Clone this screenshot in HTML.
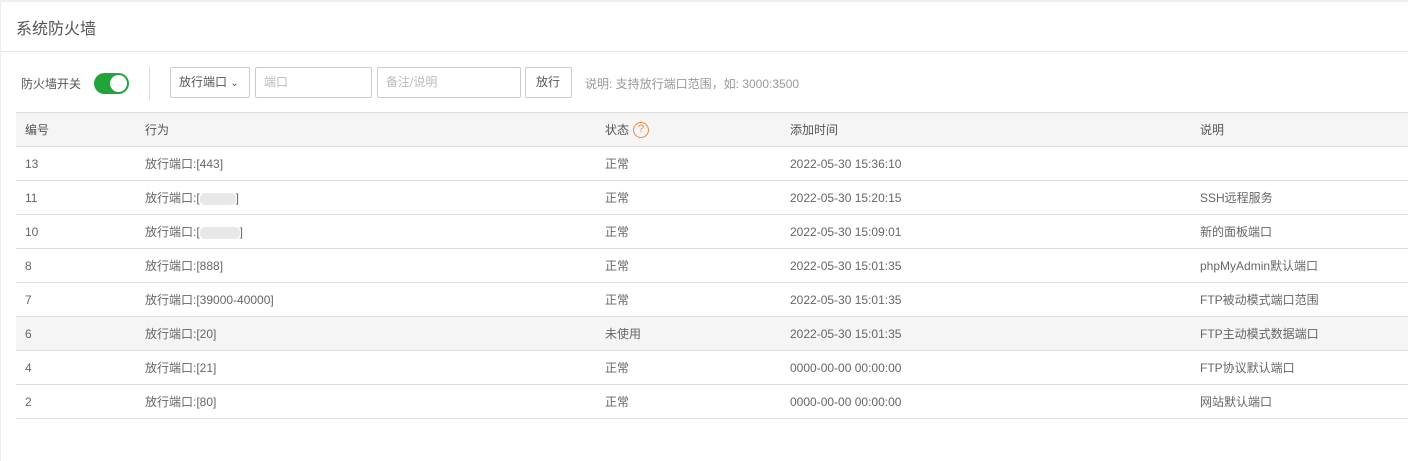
<!DOCTYPE html>
<html><head><meta charset="utf-8"><style>
*{margin:0;padding:0;box-sizing:border-box}
body{width:1408px;height:461px;background:#eee;font-family:"Liberation Sans","Noto Sans CJK SC",sans-serif;font-size:12px;color:#666;overflow:hidden;position:relative}
.panel{position:absolute;left:1px;top:2px;width:1407px;height:459px;background:#fff}
.title{height:50px;border-bottom:1px solid #e6e6e6;padding-left:15px;padding-top:3px;line-height:50px;font-size:16px;color:#555}
.bar{position:absolute;top:65px;left:0;height:32px;width:100%}
.lbl{position:absolute;left:20px;top:8px;color:#555}
.sw{position:absolute;left:93px;top:6px;width:35px;height:21px;border-radius:11px;background:#20a53a}
.sw i{position:absolute;right:2px;top:2px;width:17px;height:17px;border-radius:50%;background:#fff}
.sep{position:absolute;left:148px;top:0;width:1px;height:33px;background:#ddd}
.box{position:absolute;top:0;height:31px;border:1px solid #ccc;border-radius:2px;line-height:29px;padding-left:8px;color:#bbb}
.note{position:absolute;left:584px;top:8px;color:#999}
table{position:absolute;left:15px;top:110px;width:1392px;border-collapse:collapse}
td,th{height:34px;border-top:1px solid #ddd;border-bottom:1px solid #ddd;text-align:left;font-weight:normal;padding-left:9px;color:#666}
th{background:#f5f5f5;color:#555}
tr.h td{background:#f5f5f5}
.q{display:inline-block;width:16px;height:16px;border:1.5px solid #f0883a;border-radius:50%;color:#f0883a;text-align:center;line-height:13px;font-size:11px;vertical-align:middle;margin-left:4px}
.blur{display:inline-block;width:36px;height:12px;background:#e8e8e8;border-radius:5px;vertical-align:middle}
</style></head><body><div class="panel">
<div class="title">系统防火墙</div>
<div class="bar">
<span class="lbl">防火墙开关</span><div class="sw"><i></i></div><div class="sep"></div>
<div class="box" style="left:169px;width:80px;color:#555">放行端口 <span style="font-size:10px">&#8964;</span></div>
<div class="box" style="left:254px;width:117px">端口</div>
<div class="box" style="left:376px;width:144px">备注/说明</div>
<div class="box" style="left:524px;width:47px;color:#555;padding-left:10px">放行</div>
<span class="note">说明: 支持放行端口范围，如: 3000:3500</span>
</div>
<table>
<tr><th style="width:120px">编号</th><th style="width:460px">行为</th><th style="width:185px">状态<span class="q">?</span></th><th style="width:410px">添加时间</th><th>说明</th></tr>
<tr><td>13</td><td>放行端口:[443]</td><td>正常</td><td>2022-05-30 15:36:10</td><td></td></tr>
<tr><td>11</td><td>放行端口:[<span class="blur"></span>]</td><td>正常</td><td>2022-05-30 15:20:15</td><td>SSH远程服务</td></tr>
<tr><td>10</td><td>放行端口:[<span class="blur" style="width:40px"></span>]</td><td>正常</td><td>2022-05-30 15:09:01</td><td>新的面板端口</td></tr>
<tr><td>8</td><td>放行端口:[888]</td><td>正常</td><td>2022-05-30 15:01:35</td><td>phpMyAdmin默认端口</td></tr>
<tr><td>7</td><td>放行端口:[39000-40000]</td><td>正常</td><td>2022-05-30 15:01:35</td><td>FTP被动模式端口范围</td></tr>
<tr class="h"><td>6</td><td>放行端口:[20]</td><td>未使用</td><td>2022-05-30 15:01:35</td><td>FTP主动模式数据端口</td></tr>
<tr><td>4</td><td>放行端口:[21]</td><td>正常</td><td>0000-00-00 00:00:00</td><td>FTP协议默认端口</td></tr>
<tr><td>2</td><td>放行端口:[80]</td><td>正常</td><td>0000-00-00 00:00:00</td><td>网站默认端口</td></tr>
</table>
</div></body></html>
